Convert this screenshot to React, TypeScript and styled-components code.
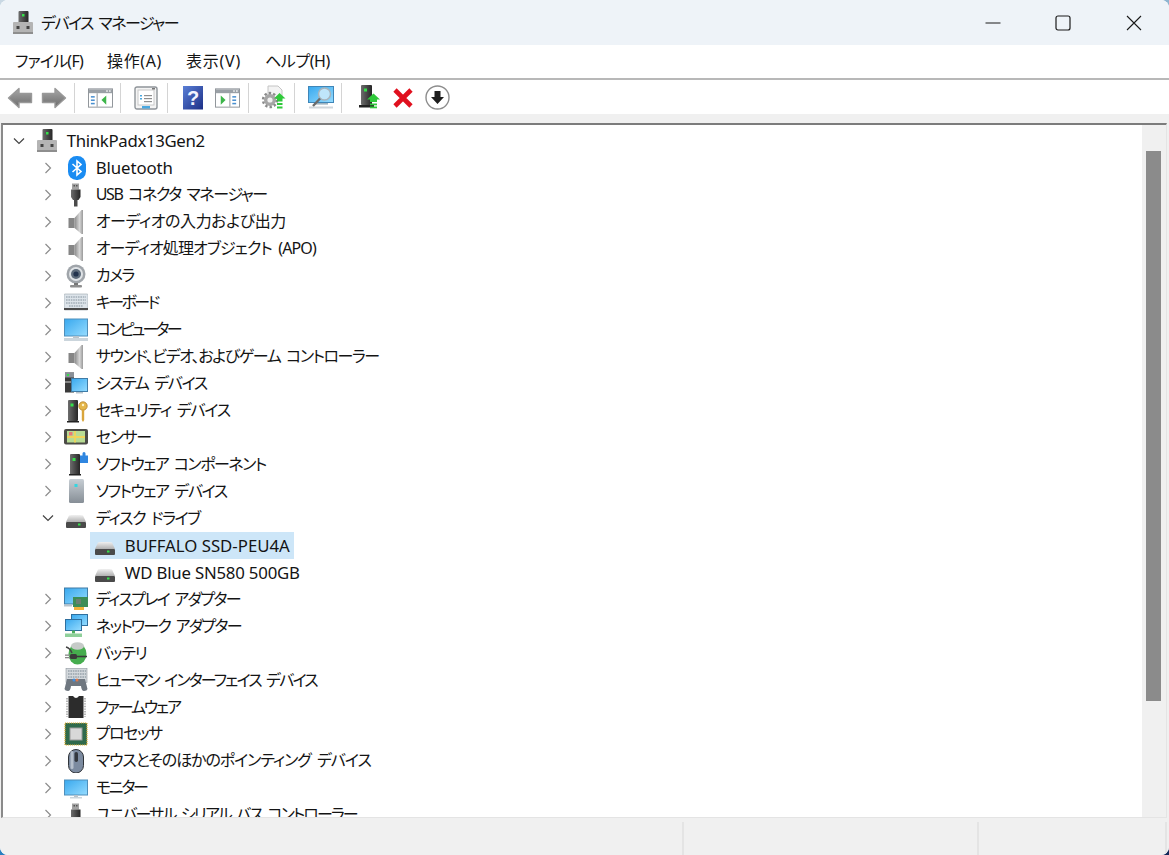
import React, { FC, useLayoutEffect, useRef } from 'react';
import styled, { createGlobalStyle } from 'styled-components';

const GlobalStyle = createGlobalStyle`
    html, body, #root {
        margin: 0;
        height: 100%;
        overflow: hidden;
    }
    body {
        background:
            linear-gradient(to right, #c9d8e4, #8db4d0) top / 100% 50% no-repeat,
            linear-gradient(to right, #2a7fc0, #12285a) bottom / 100% 50% no-repeat;
    }
`;

const FONT = `"Noto Sans", "Noto Sans CJK JP", sans-serif`;

const Window = styled.div`
    height: 855px;
    display: flex;
    flex-direction: column;
    border-radius: 8px;
    overflow: hidden;
    background: #fff;
    color: #141414;
    font-family: ${FONT};
    font-feature-settings: "palt";
`;

const TitleBar = styled.div`
    height: 45px;
    flex: none;
    display: flex;
    align-items: center;
    background: #eef3f8;
    padding-left: 11px;
`;

const TitleText = styled.div`
    margin-left: 6px;
    font-size: 16px;
    line-height: 20px;
    word-spacing: 3px;
    flex: 1;
`;

const WinButton = styled.div`
    width: 70.5px;
    height: 45px;
    display: flex;
    align-items: center;
    justify-content: center;
`;

const MenuBar = styled.div`
    height: 33px;
    flex: none;
    display: flex;
    align-items: center;
    padding-left: 15px;
    gap: 24px;
    border-bottom: 2px solid #b8b8b8;
    box-sizing: content-box;
`;

const MenuItem = styled.div`
    font-size: 16px;
    line-height: 33px;
`;

const FitSpan = styled.span`
    display: inline-block;
`;

const Toolbar = styled.div`
    height: 33px;
    flex: none;
    display: flex;
    align-items: center;
    padding: 1px 0 0 3px;
    background: #fff;
`;

const ToolButton = styled.div<{ $w?: number }>`
    width: ${(p) => p.$w ?? 34}px;
    height: 33px;
    flex: none;
    display: flex;
    align-items: center;
    justify-content: center;
`;

const ToolSep = styled.div<{ $left?: number; $right?: number }>`
    width: 1px;
    height: 30px;
    flex: none;
    background: #d4d4d4;
    margin: 0 ${(p) => p.$right ?? 8}px 0 ${(p) => p.$left ?? 3}px;
`;

const Strip = styled.div`
    height: 9px;
    flex: none;
    background: #f0f0f0;
`;

const Main = styled.div`
    flex: 1;
    min-height: 0;
    display: flex;
    background: #f0f0f0;
    padding: 0 2px 0 1px;
`;

const Tree = styled.div`
    flex: 1;
    min-width: 0;
    display: flex;
    background: #fff;
    border-top: 2px solid #7c7c7c;
    border-left: 2px solid #8a8a8a;
    border-right: 1px solid #e4e4e4;
    border-bottom: 1px solid #e4e4e4;
`;

const TreeList = styled.div`
    flex: 1;
    min-width: 0;
    overflow: hidden;
    padding-top: 2.5px;
`;

const Row = styled.div<{ $level: number }>`
    height: 26.96px;
    display: flex;
    align-items: center;
    padding-left: ${(p) => 8 + p.$level * 29}px;
    white-space: nowrap;
`;

const Chevron = styled.div`
    width: 16px;
    height: 16px;
    flex: none;
    margin-right: 5px;
    display: flex;
    align-items: center;
    justify-content: center;
`;

const Item = styled.div<{ $selected?: boolean }>`
    height: 27px;
    display: flex;
    align-items: center;
    padding: 0 4px 0 3px;
    background: ${(p) => (p.$selected ? '#cde6f8' : 'transparent')};
`;

const IconSlot = styled.div`
    width: 24px;
    height: 24px;
    flex: none;
    margin-right: 7.8px;
`;

const Label = styled.span<{ $latin?: boolean }>`
    display: inline-block;
    font-size: ${(p) => (p.$latin ? 16.8 : 16)}px;
    word-spacing: ${(p) => (p.$latin ? 0 : 3)}px;
    line-height: 27px;
`;

const Scrollbar = styled.div`
    width: 24px;
    flex: none;
    background: #f0f0f0;
    padding-top: 26px;
    box-sizing: border-box;
`;

const Thumb = styled.div`
    width: 15px;
    height: 550px;
    margin-left: 4px;
    background: #8b8b8b;
`;

const StatusBar = styled.div`
    height: 33px;
    flex: none;
    display: flex;
    background: #f0f0f0;
    padding: 4px 2px 0 0;
`;

const StatusPane = styled.div<{ $width?: number }>`
    flex: ${(p) => (p.$width ? `0 0 ${p.$width}px` : '1')};
    border-right: 2px solid #e4e4e4;
`;

const HiddenDefs = styled.svg`
    position: absolute;
    width: 0;
    height: 0;
`;

// squeezes a text to the width it has in the Windows font (Yu Gothic UI kana are narrower)
function useFit<T extends HTMLElement>(width?: number) {
    const ref = useRef<T>(null);
    useLayoutEffect(() => {
        const el = ref.current;
        if (!el || !width) return;
        el.style.letterSpacing = '0px';
        const natural = el.getBoundingClientRect().width;
        const chars = (el.textContent ?? '').length || 1;
        el.style.letterSpacing = `${(width - natural) / chars}px`;
    }, [width]);
    return ref;
}

const FitLabel: FC<{ w: number; latin?: boolean; children: string }> = ({ w, latin, children }) => {
    const ref = useFit<HTMLSpanElement>(w);
    return <Label ref={ref} $latin={latin}>{children}</Label>;
};

const FitMenu: FC<{ w: number; children: string }> = ({ w, children }) => {
    const ref = useFit<HTMLSpanElement>(w);
    return <MenuItem><FitSpan ref={ref}>{children}</FitSpan></MenuItem>;
};

const FitTitle: FC<{ w: number; children: string }> = ({ w, children }) => {
    const ref = useFit<HTMLSpanElement>(w);
    return <TitleText><FitSpan ref={ref}>{children}</FitSpan></TitleText>;
};

const Defs: FC = () => (
    <HiddenDefs aria-hidden="true">
        <defs>
            <linearGradient id="dark" x1="0" x2="1" y1="0" y2="0">
                <stop offset="0" stopColor="#6d6d6d" />
                <stop offset="1" stopColor="#262626" />
            </linearGradient>
            <linearGradient id="cone" x1="0" x2="1" y1="0" y2="0">
                <stop offset="0" stopColor="#8a8a8a" />
                <stop offset="0.6" stopColor="#d6d6d6" />
                <stop offset="1" stopColor="#9a9a9a" />
            </linearGradient>
            <linearGradient id="screen" x1="0" x2="1" y1="0" y2="1">
                <stop offset="0" stopColor="#38a8ee" />
                <stop offset="1" stopColor="#96dcff" />
            </linearGradient>
            <linearGradient id="tower" x1="0" x2="0" y1="0" y2="1">
                <stop offset="0" stopColor="#c7ced4" />
                <stop offset="1" stopColor="#868e96" />
            </linearGradient>
            <linearGradient id="help" x1="0" x2="1" y1="0" y2="1">
                <stop offset="0" stopColor="#5a7fd6" />
                <stop offset="1" stopColor="#1c2f86" />
            </linearGradient>
            <linearGradient id="arrow" x1="0" x2="0" y1="0" y2="1">
                <stop offset="0" stopColor="#a8a8a8" />
                <stop offset="1" stopColor="#6a6a6a" />
            </linearGradient>
            <linearGradient id="disk" x1="0" x2="0" y1="0" y2="1">
                <stop offset="0" stopColor="#f0f0f0" />
                <stop offset="1" stopColor="#b0b0b0" />
            </linearGradient>
        </defs>
    </HiddenDefs>
);

type SvgProps = { size?: number; children: React.ReactNode };
const Ico: FC<SvgProps> = ({ size = 24, children }) => (
    <svg width={size} height={size} viewBox="0 0 24 24" style={{ display: 'block' }}>{children}</svg>
);

const HostIcon: FC<{ size?: number }> = ({ size }) => (
    <Ico size={size}>
        <rect x="7.5" y="0" width="10" height="12" rx="1" fill="url(#dark)" />
        <rect x="11" y="3" width="2.5" height="2.5" fill="#35e04a" />
        <rect x="2" y="11" width="20" height="12" rx="1" fill="#b4b4b4" />
        <rect x="5.5" y="15" width="3" height="3" fill="#444" />
        <rect x="15.5" y="15" width="3" height="3" fill="#444" />
        <rect x="2" y="21" width="20" height="2" fill="#8e8e8e" />
    </Ico>
);

const BluetoothIcon = () => (
    <Ico>
        <rect x="4" y="0" width="18" height="24" rx="8.5" fill="#1a8cf2" />
        <path d="M8.5 8 L17 15.5 L13 19 V5 L17 8.5 L8.5 16" fill="none" stroke="#fff" strokeWidth="1.6" />
    </Ico>
);

const UsbIcon = () => (
    <Ico>
        <rect x="8" y="0.5" width="7" height="6" fill="#a2a2a2" />
        <rect x="9.5" y="2" width="1.5" height="1.5" fill="#555" />
        <rect x="12" y="2" width="1.5" height="1.5" fill="#555" />
        <path d="M7 6.5 H16.5 V14 L14.5 17 H9 L7 14 Z" fill="url(#dark)" />
        <rect x="10" y="17" width="3.5" height="6.5" fill="#4a4a4a" />
    </Ico>
);

const SpeakerIcon = () => (
    <Ico>
        <rect x="4.5" y="8" width="6" height="10" fill="#858585" />
        <path d="M10.5 8 L17.5 0 H19 V24 H17.5 L10.5 18 Z" fill="url(#cone)" />
    </Ico>
);

const CameraIcon = () => (
    <Ico>
        <circle cx="12" cy="10" r="9.5" fill="#a0a5aa" />
        <circle cx="12" cy="10" r="7" fill="#dfe3e6" />
        <circle cx="12" cy="10" r="5" fill="#5f6d7c" />
        <circle cx="12" cy="10" r="2.6" fill="#23344e" />
        <rect x="10" y="19" width="4" height="2" fill="#777" />
        <rect x="6" y="21" width="12" height="2.5" rx="1" fill="#8e8e8e" />
    </Ico>
);

const KeyboardIcon = () => (
    <Ico>
        <rect x="0" y="3" width="24" height="16" rx="1" fill="#dde4ea" stroke="#9aa4ad" strokeWidth="0.6" />
        <g stroke="#a3aeb8" strokeWidth="1.6" strokeDasharray="1.6 0.8">
            <line x1="2" x2="22" y1="6" y2="6" />
            <line x1="2" x2="22" y1="9" y2="9" />
            <line x1="2" x2="22" y1="12" y2="12" />
            <line x1="5" x2="19" y1="15" y2="15" />
        </g>
        <rect x="0" y="17" width="24" height="2" fill="#4b4b4b" />
    </Ico>
);

const MonitorIcon = () => (
    <Ico>
        <rect x="0.5" y="1" width="23" height="17" fill="url(#screen)" stroke="#4f8fbb" />
        <rect x="9" y="18" width="6" height="2" fill="#b9c4cc" />
        <rect x="0" y="20" width="24" height="3" fill="#cbd5dc" />
    </Ico>
);

const SystemIcon = () => (
    <Ico>
        <rect x="1" y="0.5" width="9" height="20" fill="#3a3a3a" />
        <rect x="1" y="0.5" width="9" height="5" fill="#8a9098" />
        <rect x="3" y="2" width="2" height="2" fill="#35e04a" />
        <rect x="1" y="9" width="9" height="2" fill="#888" />
        <rect x="7.5" y="6.5" width="16" height="13" fill="url(#screen)" stroke="#3f7ba6" />
        <rect x="12" y="20" width="7" height="1.5" fill="#b9c4cc" />
    </Ico>
);

const SecurityIcon = () => (
    <Ico>
        <rect x="4" y="1" width="10" height="21" rx="1" fill="url(#dark)" />
        <rect x="3" y="22" width="12" height="1.5" fill="#222" />
        <rect x="6.5" y="4.5" width="3" height="3" fill="#35e04a" />
        <circle cx="19" cy="7" r="4.2" fill="#e5b64a" stroke="#b4822a" strokeWidth="0.8" />
        <circle cx="19" cy="6" r="1.2" fill="#fff3c8" />
        <path d="M17.8 11 H20.2 V21 L19 23 L17.8 21 Z" fill="#d9a53c" />
    </Ico>
);

const SensorIcon = () => (
    <Ico>
        <rect x="0" y="4" width="24" height="15.5" rx="2" fill="#4b4b46" />
        <rect x="3" y="6" width="18" height="11.5" fill="#b8dc94" />
        <path d="M3 12 H21 M11 6 V17.5" stroke="#f1d45a" strokeWidth="1.8" />
        <rect x="5" y="7" width="3.5" height="3.5" fill="#e87a78" />
    </Ico>
);

const ComponentIcon = () => (
    <Ico>
        <rect x="6" y="2" width="10" height="21" rx="1" fill="url(#dark)" />
        <rect x="5" y="22" width="12" height="1.5" fill="#222" />
        <rect x="8.5" y="6" width="3" height="3" fill="#35e04a" />
        <path d="M16 3.5 H18.5 V1.5 A1.5 1.5 0 0 1 21.5 1.5 V3.5 H25 V11 H16 Z" fill="#2f86e0" />
    </Ico>
);

const SoftDeviceIcon = () => (
    <Ico>
        <rect x="5" y="0" width="15" height="24" rx="1.5" fill="url(#tower)" />
        <rect x="10.5" y="5" width="3" height="3" fill="#34d6e0" />
    </Ico>
);

const DiskIcon = () => (
    <Ico>
        <path d="M2 16 L5 9.5 Q6 9 8 9 H16 Q18 9 19 9.5 L22 16 Z" fill="url(#disk)" />
        <rect x="2" y="16" width="20" height="6" rx="1" fill="#4a4a4a" />
        <rect x="14" y="17.5" width="2.5" height="2" fill="#35e04a" />
    </Ico>
);

const DisplayIcon = () => (
    <Ico>
        <rect x="0.5" y="1" width="23" height="16" fill="url(#screen)" stroke="#3f7ba6" />
        <rect x="9" y="10" width="15" height="10" fill="#3d8d58" />
        <rect x="12" y="12" width="5" height="5" fill="#6b7f70" />
        <rect x="10" y="20" width="10" height="3" fill="#f3b23a" />
        <rect x="0" y="17.5" width="8" height="2" fill="#b9c4cc" />
    </Ico>
);

const NetworkIcon = () => (
    <Ico>
        <rect x="7.5" y="0.5" width="16" height="11" fill="url(#screen)" stroke="#2f6f9e" />
        <rect x="1.5" y="5.5" width="16" height="11" fill="url(#screen)" stroke="#2f6f9e" />
        <rect x="8" y="16.5" width="3" height="3" fill="#4fb060" />
        <rect x="1" y="19.5" width="17" height="3.5" fill="#8fd09a" />
    </Ico>
);

const BatteryIcon = () => (
    <Ico>
        <ellipse cx="13.5" cy="13" rx="9" ry="10.5" fill="#46ad4e" />
        <ellipse cx="13.5" cy="5" rx="6.5" ry="3.8" fill="#c6cbc8" />
        <path d="M2 6 Q6 7 8 12" fill="none" stroke="#444" strokeWidth="1.5" />
        <rect x="6" y="13" width="7" height="5" rx="1.5" fill="#3a3a3a" />
        <rect x="1" y="13.5" width="5" height="1.3" fill="#888" />
        <rect x="1" y="16" width="5" height="1.3" fill="#888" />
        <path d="M13 15.5 H23" stroke="#3a3a3a" strokeWidth="1.6" />
    </Ico>
);

const HidIcon = () => (
    <Ico>
        <rect x="2" y="0.5" width="21" height="14" fill="#d3d8dc" stroke="#8f979e" strokeWidth="0.6" />
        <g stroke="#98a2aa" strokeWidth="1.5" strokeDasharray="1.6 0.8">
            <line x1="4" x2="22" y1="3" y2="3" />
            <line x1="4" x2="22" y1="6" y2="6" />
            <line x1="4" x2="22" y1="9" y2="9" />
        </g>
        <path d="M0.5 21 L3 11 H21 L23.5 21 Q23 23 20 23 Q17.5 23 17 18 H7 Q6.5 23 4 23 Q1 23 0.5 21 Z" fill="#6f7780" />
        <circle cx="10" cy="12" r="1.5" fill="#3f8fe0" />
        <circle cx="13" cy="12" r="1.5" fill="#e0784a" />
    </Ico>
);

const FirmwareIcon = () => (
    <Ico>
        <path d="M4.5 1 H9 Q12 5 15 1 H19.5 V23 H4.5 Z" fill="#2c2c2c" />
        <g stroke="#8a8a8a" strokeWidth="1.2" strokeDasharray="1.4 1.2">
            <line x1="3" x2="3" y1="3" y2="22" />
            <line x1="21" x2="21" y1="3" y2="22" />
        </g>
    </Ico>
);

const CpuIcon = () => (
    <Ico>
        <rect x="1" y="1" width="22" height="22" fill="#2f6a4c" stroke="#d9ad3a" strokeWidth="1.2" strokeDasharray="1.2 0.8" />
        <rect x="6" y="6" width="12" height="12" fill="#d8d8d8" stroke="#9a9a9a" />
    </Ico>
);

const MouseIcon = () => (
    <Ico>
        <rect x="4.5" y="0.5" width="15" height="23.5" rx="7.5" fill="#7c8ba0" stroke="#2f3338" strokeWidth="1" />
        <rect x="6.5" y="2" width="3" height="18" rx="1.5" fill="#b6c0cc" />
        <rect x="10.5" y="3" width="3.5" height="10" rx="1.7" fill="#34383e" />
    </Ico>
);

const Monitor2Icon = () => (
    <Ico>
        <rect x="0.5" y="4" width="23" height="15" fill="url(#screen)" stroke="#4f8fbb" />
        <rect x="10" y="19" width="4" height="2" fill="#b9c4cc" />
        <rect x="6" y="21" width="12" height="1.5" fill="#cbd5dc" />
    </Ico>
);

const ChevronRight = () => (
    <svg width="16" height="16" viewBox="0 0 16 16">
        <path d="M5.5 3 L10.5 8 L5.5 13" fill="none" stroke="#8c8c8c" strokeWidth="1.2" />
    </svg>
);

const ChevronDown = () => (
    <svg width="16" height="16" viewBox="0 0 16 16">
        <path d="M3 5.5 L8 10.5 L13 5.5" fill="none" stroke="#444" strokeWidth="1.2" />
    </svg>
);

/* toolbar icons */
const ArrowIcon: FC<{ flip?: boolean }> = ({ flip }) => (
    <svg width="26" height="24" viewBox="0 0 26 24" style={flip ? { transform: 'scaleX(-1)' } : undefined}>
        <path d="M1.5 12 L12 2.5 V7.5 H24.5 V16.5 H12 V21.5 Z" fill="url(#arrow)" stroke="#999" strokeWidth="1.4" strokeLinejoin="round" />
    </svg>
);

const PaneIcon: FC<{ side: 'left' | 'right' }> = ({ side }) => (
    <svg width="25" height="20" viewBox="0 0 26 20">
        <rect x="0.5" y="0.5" width="25" height="19" fill="#fff" stroke="#8f9499" />
        <rect x="1" y="1" width="24" height="4" fill="#9aa0a6" />
        <rect x="19" y="2" width="1.5" height="1.5" fill="#fff" />
        <rect x="22" y="2" width="1.5" height="1.5" fill="#fff" />
        {side === 'left' ? (
            <>
                <g fill="#4a90d0">
                    <rect x="3" y="8" width="4" height="1.6" />
                    <rect x="3" y="11.5" width="4" height="1.6" />
                    <rect x="3" y="15" width="4" height="1.6" />
                </g>
                <rect x="9" y="5" width="1" height="14" fill="#8f9499" />
                <path d="M19 7.5 V17 L14 12.2 Z" fill="#3db54a" />
            </>
        ) : (
            <>
                <path d="M6 7.5 V17 L11 12.2 Z" fill="#3db54a" />
                <rect x="15" y="5" width="1" height="14" fill="#8f9499" />
                <g fill="#4a90d0">
                    <rect x="18" y="8" width="4" height="1.6" />
                    <rect x="18" y="11.5" width="4" height="1.6" />
                    <rect x="18" y="15" width="4" height="1.6" />
                </g>
            </>
        )}
    </svg>
);

const PropsIcon = () => (
    <svg width="24" height="24" viewBox="0 0 24 24">
        <rect x="1" y="1" width="22" height="22" rx="2" fill="#f4f4f4" stroke="#8f9499" strokeWidth="1.4" />
        <rect x="4" y="4" width="16" height="15" fill="#fff" stroke="#c8c8c8" />
        <rect x="18" y="2" width="3" height="1.5" fill="#777" />
        <g fill="#8f8f8f">
            <rect x="10" y="9" width="8" height="1.2" />
            <rect x="10" y="12" width="8" height="1.2" />
            <rect x="10" y="15" width="8" height="1.2" />
        </g>
        <g fill="#4aa8e0">
            <rect x="6" y="9" width="2" height="1.5" />
            <rect x="6" y="12" width="2" height="1.5" />
            <rect x="8" y="20" width="8" height="2.5" />
        </g>
    </svg>
);

const HelpIcon = () => (
    <svg width="20" height="24" viewBox="0 0 20 24">
        <rect x="0" y="0" width="20" height="23.5" fill="url(#help)" />
        <text x="10" y="18.5" textAnchor="middle" fontFamily='"Liberation Sans", sans-serif' fontWeight="700" fontSize="20" fill="#f2f4ff">?</text>
    </svg>
);

const ScanIcon = () => (
    <svg width="26" height="25" viewBox="0 0 26 25">
        <path d="M7 1 H17 L21 5 V13 H7 Z" fill="#f3f3f3" stroke="#c4c4c4" />
        <circle cx="9" cy="15" r="6" fill="#a6a6a6" />
        <circle cx="9" cy="15" r="7" fill="none" stroke="#8a8a8a" strokeWidth="2.4" strokeDasharray="2.4 2.1" />
        <circle cx="9" cy="15" r="2.6" fill="#f0f0f0" />
        <path d="M13 13.5 L18.5 8 L24.5 13.5 H21.5 V16.5 H16 V13.5 Z" fill="#2fc93a" />
        <rect x="16" y="18" width="5.5" height="2" fill="#2fc93a" />
        <rect x="16" y="21.5" width="5.5" height="2" fill="#2fc93a" />
    </svg>
);

const SearchMonitorIcon = () => (
    <svg width="26" height="24" viewBox="0 0 26 24">
        <rect x="0.5" y="0.5" width="25" height="16" fill="url(#screen)" stroke="#3f86b8" />
        <rect x="6" y="17" width="14" height="1.6" fill="#9eb3c0" />
        <rect x="1" y="20.5" width="24" height="2" fill="#cfd6db" />
        <circle cx="16.5" cy="8" r="6" fill="#bfe6fb" stroke="#a8b4bc" strokeWidth="1.5" />
        <path d="M12 12.5 L5 20" stroke="#6b6b6b" strokeWidth="2.4" />
    </svg>
);

const DriverIcon = () => (
    <svg width="22" height="25" viewBox="0 0 22 25">
        <rect x="2" y="0" width="11" height="20" rx="1" fill="url(#dark)" />
        <rect x="0" y="20" width="15" height="2.5" fill="#222" />
        <rect x="5" y="3.5" width="3" height="3" fill="#35e04a" />
        <path d="M8 14.5 L14.5 8.5 L21 14.5 H18 V17 H11 V14.5 Z" fill="#2fc93a" />
        <rect x="11" y="18.5" width="7" height="1.8" fill="#2fc93a" />
        <rect x="11" y="21.5" width="7" height="1.8" fill="#2fc93a" />
    </svg>
);

const RedX = () => (
    <svg width="22" height="22" viewBox="0 0 22 22">
        <path d="M3 3 L19 19 M19 3 L3 19" stroke="#e0101e" strokeWidth="4.6" />
    </svg>
);

const DownCircle = () => (
    <svg width="25" height="25" viewBox="0 0 25 25">
        <circle cx="12.5" cy="12.5" r="11.5" fill="#fff" stroke="#8d8d8d" strokeWidth="1.4" />
        <path d="M9.5 6 H15.5 V12 H19 L12.5 19 L6 12 H9.5 Z" fill="#1e1e1e" />
    </svg>
);

type TreeItem = { level: number; text: string; w: number; icon: React.ReactNode; open?: boolean; leaf?: boolean; selected?: boolean; latin?: boolean };

const items: TreeItem[] = [
    { level: 0, text: 'ThinkPadx13Gen2', w: 138, icon: <HostIcon />, open: true, latin: true },
    { level: 1, text: 'Bluetooth', w: 77, icon: <BluetoothIcon />, latin: true },
    { level: 1, text: 'USB コネクタ マネージャー', w: 171, icon: <UsbIcon /> },
    { level: 1, text: 'オーディオの入力および出力', w: 190, icon: <SpeakerIcon /> },
    { level: 1, text: 'オーディオ処理オブジェクト (APO)', w: 220, icon: <SpeakerIcon /> },
    { level: 1, text: 'カメラ', w: 38, icon: <CameraIcon /> },
    { level: 1, text: 'キーボード', w: 62, icon: <KeyboardIcon /> },
    { level: 1, text: 'コンピューター', w: 84, icon: <MonitorIcon /> },
    { level: 1, text: 'サウンド、ビデオ、およびゲーム コントローラー', w: 283, icon: <SpeakerIcon /> },
    { level: 1, text: 'システム デバイス', w: 111, icon: <SystemIcon /> },
    { level: 1, text: 'セキュリティ デバイス', w: 134, icon: <SecurityIcon /> },
    { level: 1, text: 'センサー', w: 55, icon: <SensorIcon /> },
    { level: 1, text: 'ソフトウェア コンポーネント', w: 170, icon: <ComponentIcon /> },
    { level: 1, text: 'ソフトウェア デバイス', w: 131, icon: <SoftDeviceIcon /> },
    { level: 1, text: 'ディスク ドライブ', w: 104, icon: <DiskIcon />, open: true },
    { level: 2, text: 'BUFFALO SSD-PEU4A', w: 165, icon: <DiskIcon />, leaf: true, selected: true, latin: true },
    { level: 2, text: 'WD Blue SN580 500GB', w: 175, icon: <DiskIcon />, leaf: true, latin: true },
    { level: 1, text: 'ディスプレイ アダプター', w: 144, icon: <DisplayIcon /> },
    { level: 1, text: 'ネットワーク アダプター', w: 145, icon: <NetworkIcon /> },
    { level: 1, text: 'バッテリ', w: 51, icon: <BatteryIcon /> },
    { level: 1, text: 'ヒューマン インターフェイス デバイス', w: 221, icon: <HidIcon /> },
    { level: 1, text: 'ファームウェア', w: 84, icon: <FirmwareIcon /> },
    { level: 1, text: 'プロセッサ', w: 66, icon: <CpuIcon /> },
    { level: 1, text: 'マウスとそのほかのポインティング デバイス', w: 275, icon: <MouseIcon /> },
    { level: 1, text: 'モニター', w: 51, icon: <Monitor2Icon /> },
    { level: 1, text: 'ユニバーサル シリアル バス コントローラー', w: 261, icon: <UsbIcon /> },
];

const App: FC = () => (
    <>
        <GlobalStyle />
        <Defs />
        <Window>
            <TitleBar>
                <HostIcon size={24} />
                <FitTitle w={137}>デバイス マネージャー</FitTitle>
                <WinButton>
                    <svg width="16" height="16" viewBox="0 0 16 16"><path d="M0.5 8 H15.5" stroke="#1a1a1a" /></svg>
                </WinButton>
                <WinButton>
                    <svg width="16" height="16" viewBox="0 0 16 16"><rect x="1" y="1" width="14" height="14" rx="2" fill="none" stroke="#1a1a1a" strokeWidth="1.2" /></svg>
                </WinButton>
                <WinButton>
                    <svg width="16" height="16" viewBox="0 0 16 16"><path d="M1 1 L15 15 M15 1 L1 15" stroke="#1a1a1a" strokeWidth="1.1" /></svg>
                </WinButton>
            </TitleBar>
            <MenuBar>
                <FitMenu w={68}>ファイル(F)</FitMenu>
                <FitMenu w={55}>操作(A)</FitMenu>
                <FitMenu w={55}>表示(V)</FitMenu>
                <FitMenu w={65}>ヘルプ(H)</FitMenu>
            </MenuBar>
            <Toolbar>
                <ToolButton><ArrowIcon /></ToolButton>
                <ToolButton><ArrowIcon flip /></ToolButton>
                <ToolSep />
                <ToolButton><PaneIcon side="left" /></ToolButton>
                <ToolSep />
                <ToolButton><PropsIcon /></ToolButton>
                <ToolSep $left={4} />
                <ToolButton><HelpIcon /></ToolButton>
                <ToolButton><PaneIcon side="right" /></ToolButton>
                <ToolSep $left={4} />
                <ToolButton><ScanIcon /></ToolButton>
                <ToolSep $left={3} $right={9} />
                <ToolButton><SearchMonitorIcon /></ToolButton>
                <ToolSep $left={3} $right={12} />
                <ToolButton $w={32}><DriverIcon /></ToolButton>
                <ToolButton><RedX /></ToolButton>
                <ToolButton><DownCircle /></ToolButton>
            </Toolbar>
            <Strip />
            <Main>
                <Tree>
                    <TreeList>
                        {items.map((it) => (
                            <Row key={it.text} $level={it.level}>
                                <Chevron>
                                    {it.leaf ? null : it.open ? <ChevronDown /> : <ChevronRight />}
                                </Chevron>
                                <Item $selected={it.selected}>
                                    <IconSlot>{it.icon}</IconSlot>
                                    <FitLabel w={it.w} latin={it.latin}>{it.text}</FitLabel>
                                </Item>
                            </Row>
                        ))}
                    </TreeList>
                    <Scrollbar><Thumb /></Scrollbar>
                </Tree>
            </Main>
            <StatusBar>
                <StatusPane $width={681.5} />
                <StatusPane $width={293.5} />
                <StatusPane />
            </StatusBar>
        </Window>
    </>
);

export default App;
